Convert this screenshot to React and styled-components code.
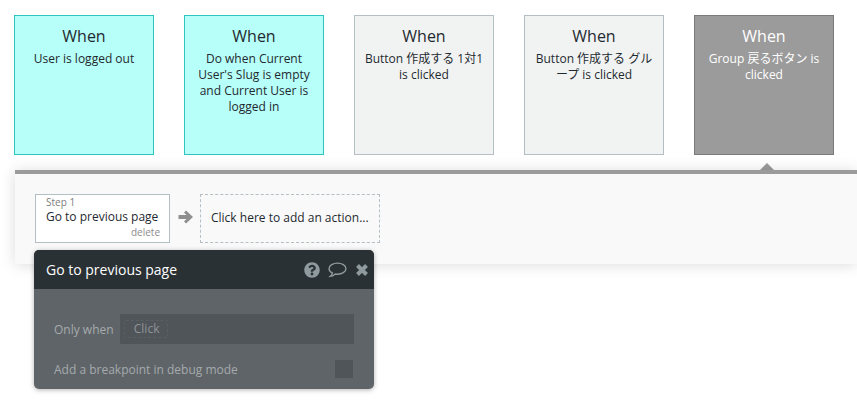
import styled, { createGlobalStyle } from "styled-components";
import { FaQuestionCircle } from "react-icons/fa";

const triggers = [
  { text: "User is logged out", tone: "cyan" },
  { text: "Do when Current User's Slug is empty and Current User is logged in", tone: "cyan" },
  { text: "Button 作成する 1対1 is clicked", tone: "plain" },
  { text: "Button 作成する グループ is clicked", tone: "plain" },
  { text: "Group 戻るボタン is clicked", tone: "active" },
];

const tones = {
  cyan: { bg: "#b7fff9", border: "#2fc4bd", color: "#1f2a30" },
  plain: { bg: "#f1f3f3", border: "#b4bfc5", color: "#1f2a30" },
  active: { bg: "#9b9b9b", border: "#7a7a7a", color: "#ffffff" },
};

const App = () => {
  return (
    <>
      <GlobalStyle />
      <Page>
        <TriggerRow>
          {triggers.map((t) => (
            <TriggerCard key={t.text} $tone={t.tone}>
              <TriggerTitle>When</TriggerTitle>
              <TriggerText>{t.text}</TriggerText>
              {t.tone === "active" && <CardPointer />}
            </TriggerCard>
          ))}
        </TriggerRow>
        <StepPanel>
          <StepBox>
            <StepLabel>Step 1</StepLabel>
            <StepName>Go to previous page</StepName>
            <StepDelete>delete</StepDelete>
          </StepBox>
          <StepArrow>
            <svg width="15" height="14" viewBox="0 0 15 14" fill="#8f8f8f">
              <path d="M8 0.500 L15 7 L8 13.500 L6 11.300 L8.600 9 L0.500 9 L0.500 5 L8.600 5 L6 2.700 Z" />
            </svg>
          </StepArrow>
          <AddBox>Click here to add an action...</AddBox>
          <Popup>
            <PopupHeader>
              <PopupTitle>Go to previous page</PopupTitle>
              <PopupIcons>
                <FaQuestionCircle size={16} />
                <svg width="19" height="18" viewBox="0 0 18 17" fill="none">
                  <path
                    d="M9 2C4.900 2 1 4.200 1 7.200c0 1.700 1.200 3.100 3.200 4 -.2 1.300-.9 2.400-2 3.300 1.900-.2 3.500-1 4.700-2.200.7.1 1.400.2 2.100.2 4.100 0 8-2.200 8-5.300S13.100 2 9 2z"
                    stroke="#8f9a9f"
                    strokeWidth="1.300"
                  />
                </svg>
                <svg width="14" height="14" viewBox="0 0 14 14" fill="none">
                  <path d="M2.500 2.500 L11.500 11.500 M11.500 2.500 L2.500 11.500" stroke="#8f9a9f" strokeWidth="4" />
                </svg>
              </PopupIcons>
            </PopupHeader>
            <PopupBody>
              <FieldRow>
                <FieldLabel>Only when</FieldLabel>
                <ConditionInput>
                  <ConditionChip>Click</ConditionChip>
                </ConditionInput>
              </FieldRow>
              <CheckRow>
                <FieldLabel>Add a breakpoint in debug mode</FieldLabel>
                <CheckSquare />
              </CheckRow>
            </PopupBody>
          </Popup>
        </StepPanel>
      </Page>
    </>
  );
};

const GlobalStyle = createGlobalStyle`
  html, body {
    margin: 0;
    background: #ffffff;
    overflow: hidden;
  }
  * {
    box-sizing: border-box;
  }
  body {
    font-family: "Open Sans", "Noto Sans CJK JP", sans-serif;
  }
`;

const Page = styled.div`
  width: 857px;
  height: 409px;
  padding-top: 15px;
  overflow: hidden;
`;

const TriggerRow = styled.div`
  display: flex;
  gap: 30px;
  padding-left: 14px;
`;

const TriggerCard = styled.div`
  position: relative;
  width: 140px;
  height: 140px;
  padding: 9px 9px 0;
  text-align: center;
  background: ${({ $tone }) => tones[$tone].bg};
  border: 1px solid ${({ $tone }) => tones[$tone].border};
  color: ${({ $tone }) => tones[$tone].color};
`;

const TriggerTitle = styled.div`
  font-size: 16px;
  line-height: 22px;
`;

const TriggerText = styled.div`
  margin-top: 4px;
  font-size: 12px;
  line-height: 16px;
  line-break: loose;
`;

const CardPointer = styled.div`
  position: absolute;
  left: 65px;
  top: 147px;
  width: 0;
  height: 0;
  border-left: 7px solid transparent;
  border-right: 7px solid transparent;
  border-bottom: 7px solid #9b9b9b;
`;

const StepPanel = styled.div`
  position: relative;
  display: flex;
  align-items: flex-start;
  height: 94px;
  margin: 15px 0 0 15px;
  padding: 20px 0 0 20px;
  background: #f9f9f9;
  border-top: 4px solid #9b9b9b;
  box-shadow: 0 1px 14px rgba(0, 0, 0, 0.14);
`;

const StepBox = styled.div`
  display: flex;
  flex-direction: column;
  width: 135px;
  height: 49px;
  padding: 2px 10px 0;
  background: #ffffff;
  border: 1px solid #b4bfc5;
`;

const StepLabel = styled.div`
  font-size: 10px;
  line-height: 11px;
  color: #7d7d7d;
`;

const StepName = styled.div`
  font-size: 12px;
  line-height: 18px;
  color: #1f2a30;
  white-space: nowrap;
`;

const StepDelete = styled.div`
  font-size: 10px;
  line-height: 13px;
  margin-right: -1px;
  text-align: right;
  color: #8d8d8d;
`;

const StepArrow = styled.div`
  display: flex;
  align-items: center;
  justify-content: center;
  width: 30px;
  height: 46px;
`;

const AddBox = styled.div`
  display: flex;
  align-items: center;
  width: 180px;
  height: 49px;
  padding: 0 0 3px 10px;
  font-size: 12px;
  color: #1f2a30;
  white-space: nowrap;
  border: 1px dashed #b4bfc5;
`;

const Popup = styled.div`
  position: absolute;
  left: 19px;
  top: 76px;
  width: 340px;
  height: 139px;
  border-radius: 5px;
  overflow: hidden;
  background: #5f6468;
  box-shadow: 0 1px 5px rgba(0, 0, 0, 0.3);
`;

const PopupHeader = styled.div`
  display: flex;
  align-items: center;
  justify-content: space-between;
  height: 39px;
  padding: 0 5px 0 12px;
  background: #2a3134;
`;

const PopupTitle = styled.div`
  font-size: 14px;
  color: #ffffff;
`;

const PopupIcons = styled.div`
  display: flex;
  align-items: center;
  gap: 8px;
  color: #8f9a9f;
`;

const PopupBody = styled.div`
  display: flex;
  flex-direction: column;
  padding: 25px 20px 0;
`;

const FieldRow = styled.div`
  display: flex;
  align-items: center;
  gap: 6px;
`;

const FieldLabel = styled.div`
  font-size: 12px;
  color: #a5aaad;
  white-space: nowrap;
`;

const ConditionInput = styled.div`
  display: flex;
  align-items: center;
  width: 234px;
  height: 30px;
  padding-left: 4px;
  background: #50555a;
`;

const ConditionChip = styled.div`
  width: 44px;
  height: 18px;
  padding-left: 2px;
  font-size: 12px;
  line-height: 16px;
  text-align: center;
  color: #8e9397;
  border: 1px dashed #5a5f63;
  border-radius: 2px;
`;

const CheckRow = styled.div`
  display: flex;
  align-items: center;
  justify-content: space-between;
  height: 18px;
  margin-top: 16px;
`;

const CheckSquare = styled.div`
  width: 18px;
  height: 18px;
  background: #50555a;
  margin-right: 1px;
`;

export default App;
